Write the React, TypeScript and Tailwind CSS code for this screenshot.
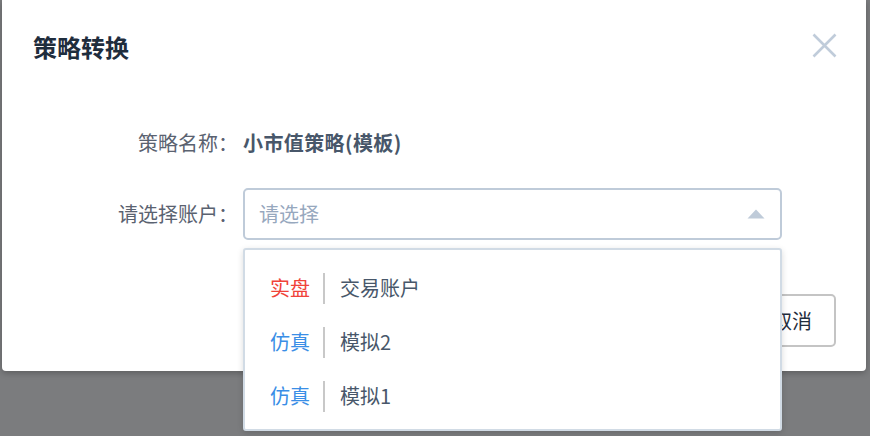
import React from "react";

const accounts = [
  { tag: "实盘", tagClass: "text-[#f0433a]", name: "交易账户" },
  { tag: "仿真", tagClass: "text-[#3a8ee6]", name: "模拟2" },
  { tag: "仿真", tagClass: "text-[#3a8ee6]", name: "模拟1" },
];

export default function App() {
  return (
    <div className="relative w-[870px] h-[436px] overflow-hidden bg-[#7b7c7e] font-['Noto_Sans_CJK_SC',sans-serif]">
      {/* Dialog */}
      <div className="relative ml-[2px] w-[864px] h-[371px] bg-white rounded-b-[4px] shadow-[0_2px_6px_rgba(0,0,0,0.25)]">
        {/* Header */}
        <div className="h-[94px] flex items-center justify-between pl-[31px] pr-[29px]">
          <div className="text-[24px] leading-[24px] font-bold text-[#1f2d3d]">策略转换</div>
          <svg width="25" height="25" viewBox="0 0 25 25" className="mt-[-4px]">
            <path d="M1.5 1.5 L23.5 23.5 M23.5 1.5 L1.5 23.5" stroke="#c0ccda" strokeWidth="2.6" />
          </svg>
        </div>

        {/* Row: strategy name */}
        <div className="mt-[31px] h-[36px] flex items-center text-[20px]">
          <div className="w-[241px] pr-[5px] text-right text-[#5a6270]">策略名称：</div>
          <div className="font-bold text-[#48576a] tracking-[0.4px]">小市值策略(模板)</div>
        </div>

        {/* Row: account select */}
        <div className="mt-[27px] h-[52px] flex items-center text-[20px]">
          <div className="w-[241px] pr-[5px] text-right text-[#5a6270]">请选择账户：</div>
          <div className="w-[539px] h-[52px] border-2 border-[#bfcbd9] rounded-[5px] flex items-center justify-between pl-[14px] pr-[15px]">
            <span className="text-[#97a8be]">请选择</span>
            <svg width="18" height="10" viewBox="0 0 18 10">
              <path d="M9 0.5 L17.5 9.5 L0.5 9.5 Z" fill="#bfcbd9" />
            </svg>
          </div>
        </div>

        {/* Footer buttons */}
        <div className="mt-[54px] flex justify-end pr-[30px] gap-[12px]">
          <button className="h-[53px] px-[22px] border-2 border-[#c4c4c4] rounded-[5px] bg-white text-[20px] text-[#1f2d3d]">
            确定
          </button>
          <button className="h-[53px] px-[22px] border-2 border-[#c4c4c4] rounded-[5px] bg-white text-[20px] text-[#1f2d3d]">
            取消
          </button>
        </div>
      </div>

      {/* Dropdown menu */}
      <div className="absolute left-[243px] top-[248px] w-[539px] h-[183px] bg-white border-2 border-[#d1dbe5] rounded-[3px] shadow-[0_2px_6px_rgba(0,0,0,0.15)] pt-[11px]">
        {accounts.map((a, i) => (
          <div key={i} className="h-[54px] flex items-center pl-[25px] text-[20px]">
            <span className={a.tagClass}>{a.tag}</span>
            <span className="ml-[13px] mr-[15px] w-[2px] h-[31px] bg-[#c8c8c8]" />
            <span className="text-[#48576a]">{a.name}</span>
          </div>
        ))}
      </div>
    </div>
  );
}
